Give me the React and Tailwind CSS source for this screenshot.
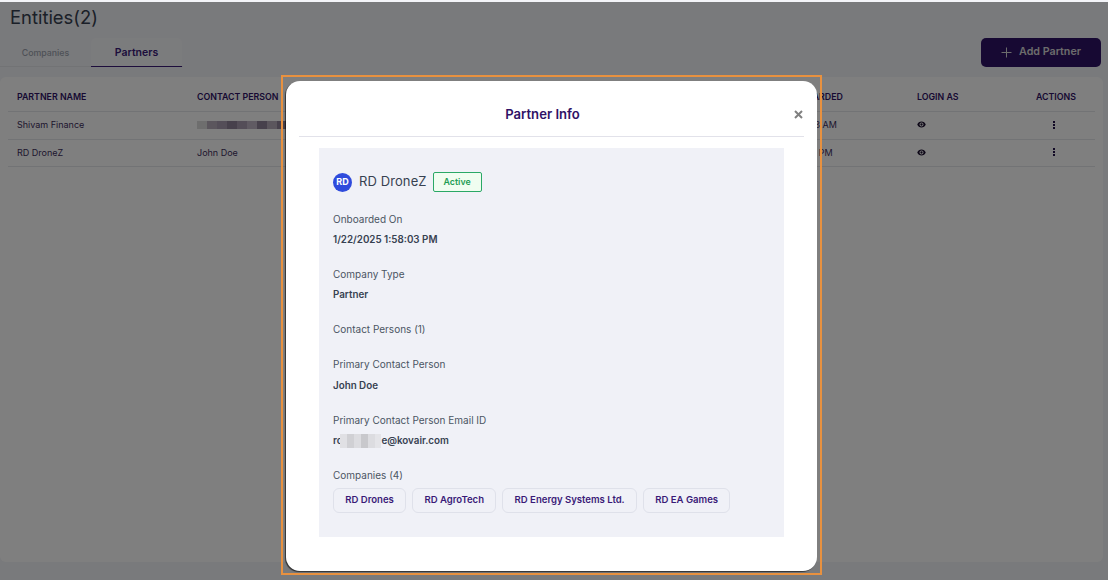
import React from "react";

const Label = ({ children, className = "" }) => (
  <div className={`text-[10px] leading-[14px] text-[#4b5563] ${className}`}>{children}</div>
);
const Value = ({ children, className = "" }) => (
  <div className={`text-[9.8px] leading-[14px] font-semibold text-[#374151] ${className}`}>{children}</div>
);
const Chip = ({ children }) => (
  <div className="h-[25px] px-[11.300px] flex items-center rounded-[6px] border border-[#dfe1ea] text-[9.550px] font-semibold text-[#3a1a78]">{children}</div>
);
const Eye = () => (
  <svg width="9" height="7" viewBox="0 0 18 14" fill="#1c1030"><path d="M9 1C5 1 2 3.500 0.500 7 2 10.500 5 13 9 13s7-2.500 8.500-6C16 3.500 13 1 9 1zm0 10a4 4 0 1 1 0-8 4 4 0 0 1 0 8z" /><circle cx="9" cy="7" r="2.300" /></svg>
);
const Dots = () => (
  <div className="flex flex-col gap-[1px] items-center">
    <i className="block w-[2px] h-[2px] bg-[#24124a]" />
    <i className="block w-[2px] h-[2px] bg-[#24124a]" />
    <i className="block w-[2px] h-[2px] bg-[#24124a]" />
  </div>
);
const Blur = ({ w, colors, h = 10, className = "" }) => (
  <span className={`inline-flex align-middle ${className}`} style={{ width: w, height: h }}>
    {colors.map((c, i) => <span key={i} className="flex-1" style={{ background: c }} />)}
  </span>
);

const Row = ({ name, person, time, blurred }) => (
  <div className="flex items-center h-[27.500px] pb-[1px] border-b border-[#e5e7eb] text-[9px] text-[#3d2d5c]">
    <div className="w-[189px] pl-[9px]">{name}</div>
    <div className="w-[588px] flex items-center">
      {blurred ? <Blur w={90} h={8} colors={["#ddd", "#b7adbb", "#a99cb0", "#8f8399", "#a99cb0", "#c0b7c6", "#8f8399", "#b7adbb", "#8f8399"]} /> : person}
    </div>
    <div className="w-[132px]">{time}</div>
    <div className="w-[119px] flex"><Eye /></div>
    <div className="flex-1 flex pl-[17px]"><Dots /></div>
  </div>
);

export default function App() {
  return (
    <div className="relative w-[1108px] h-[580px] overflow-hidden bg-[#f3f4f8] pt-[2px]" style={{ fontFamily: "Inter, 'Noto Sans', sans-serif" }}>
      <div className="px-[10px] pt-[3px]">
        <h1 className="text-[18.400px] leading-[24px] text-[#374151] font-normal">Entities(2)</h1>
      </div>
      <div className="flex items-end justify-between pt-[8px] pr-[7px]">
        <div className="flex items-end h-[30px] flex-1 mr-[798px] border-b border-[#e5e7eb]">
          <div className="w-[91px] h-full flex items-center justify-center pt-[3px] text-[8.800px] font-medium text-[#9ca3af]">Companies</div>
          <div className="w-[91px] h-[29px] -mb-px rounded-t-[5px] bg-[#f7f8fb] border-b border-[#3a1a78] flex items-center justify-center pt-[2px] text-[10.500px] font-semibold text-[#3a1a78]">Partners</div>
        </div>
        <button className="w-[120px] h-[29px] rounded-[5px] bg-[#2f1266] text-[#d8d8d8] text-[10.700px] font-semibold flex items-center justify-center gap-[7px]">
          <svg width="11" height="11" viewBox="0 0 11 11" stroke="currentColor" strokeWidth="1" fill="none"><path d="M5.500 0.500v10M0.500 5.500h10" /></svg>
          Add Partner
        </button>
      </div>
      <div className="mt-[10px] w-[1103px] h-[485px] rounded-[6px] bg-white pl-[8px] pr-[8px]">
        <div className="flex items-center h-[35px] pt-[6px] border-b border-[#e5e7eb] text-[8.800px] font-semibold text-[#2f1266]">
          <div className="w-[189px] pl-[9px]">PARTNER NAME</div>
          <div className="w-[588px]">CONTACT PERSON</div>
          <div className="w-[132px] pl-[2px]">ONBOARDED</div>
          <div className="w-[119px]">LOGIN AS</div>
          <div className="flex-1">ACTIONS</div>
        </div>
        <Row name="Shivam Finance" time="10:45:13 AM" blurred />
        <Row name="RD DroneZ" person="John Doe" time="1:58:03 PM" />
      </div>

      {/* dim layer */}
      <div className="absolute inset-x-0 top-[2px] bottom-0 bg-[rgba(0,0,0,0.5)]" />

      {/* selection frame + modal */}
      <div className="absolute left-[281px] top-[75px] w-[541px] h-[500px] border-[2px] border-[#e8913f] pl-[3px] pt-[4px] pr-[3px]">
        <div className="w-[531px] h-[490px] bg-white rounded-[14px] px-[13px] shadow-[-1px_1px_1px_rgba(0,0,0,0.6)]">
          <div className="relative h-[56px] flex items-center justify-center border-b border-[#e2e2ea] pr-[18px] pt-[13px] pb-[1px]">
            <span className="text-[13.100px] font-semibold text-[#2f1266]">Partner Info</span>
            <span className="absolute right-[1px] top-[29px]">
              <svg width="9" height="9" viewBox="0 0 9 9" stroke="#808080" strokeWidth="2" fill="none"><path d="M1 1l7 7M8 1l-7 7" /></svg>
            </span>
          </div>
          <div className="mx-[20px] mt-[11px] w-[465px] h-[389px] bg-[#f0f1f7] pl-[14px] pt-[24px]">
            <div className="flex items-center h-[20px]">
              <div className="w-[19px] h-[19px] rounded-full bg-[#2f4bdc] text-white text-[9px] font-bold flex items-center justify-center">RD</div>
              <span className="ml-[7px] text-[13px] text-[#374151] tracking-[0.1px]">RD DroneZ</span>
              <span className="ml-[6px] w-[49px] h-[20px] rounded-[2px] border border-[#2aa866] bg-[#f0fdf0] text-[#1f9d55] text-[8.800px] font-semibold flex items-center justify-center">Active</span>
            </div>
            <Label className="mt-[20px]">Onboarded On</Label>
            <Value className="mt-[7px]">1/22/2025 1:58:03 PM</Value>
            <Label className="mt-[20px]">Company Type</Label>
            <Value className="mt-[7px]">Partner</Value>
            <Label className="mt-[20px]">Contact Persons (1)</Label>
            <Label className="mt-[21px]">Primary Contact Person</Label>
            <Value className="mt-[8px]">John Doe</Value>
            <Label className="mt-[20px]">Primary Contact Person Email ID</Label>
            <Value className="mt-[7px] flex items-center">rc<Blur w={41} h={14} className="-ml-[2px]" colors={["#e0e0e4", "#d0d0d4", "#dcdce0", "#c8c8cc", "#dcdce0", "#e4e4e8"]} />e@kovair.com</Value>
            <Label className="mt-[20px]">Companies (4)</Label>
            <div className="mt-[6px] flex gap-[6px]">
              <Chip>RD Drones</Chip>
              <Chip>RD AgroTech</Chip>
              <Chip>RD Energy Systems Ltd.</Chip>
              <Chip>RD EA Games</Chip>
            </div>
          </div>
        </div>
      </div>
    </div>
  );
}
